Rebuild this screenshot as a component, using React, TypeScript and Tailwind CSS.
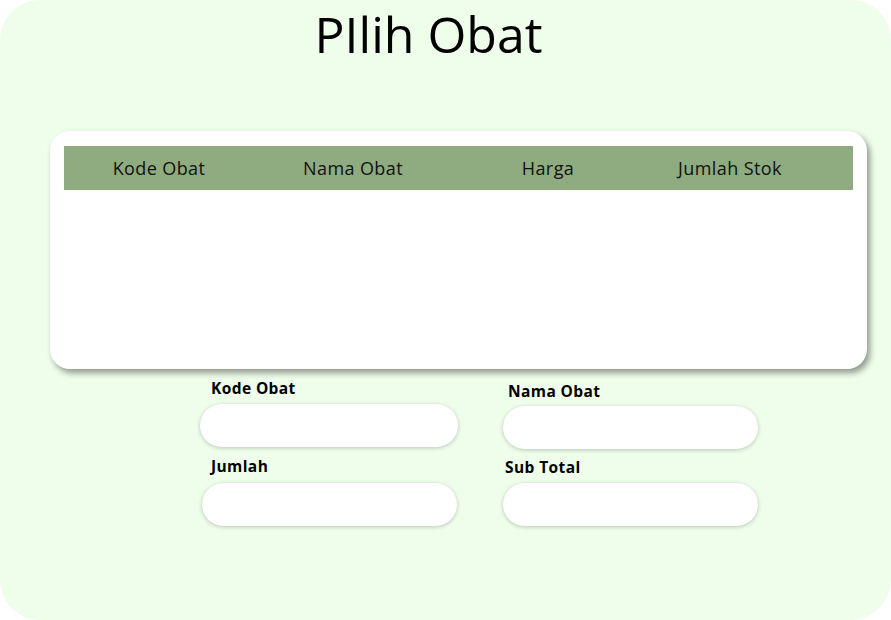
import React from "react";

const font = { fontFamily: '"Open Sans", "Noto Sans", sans-serif' };

function Field({ label, labelClass, inputClass }: { label: string; labelClass: string; inputClass: string }) {
  return (
    <>
      <div className={`h-[20px] leading-[20px] text-[15.5px] font-bold tracking-[0.4px] text-black ${labelClass}`}>{label}</div>
      <div className={`h-[43px] rounded-full bg-white shadow-[0_1px_4px_rgba(0,0,0,0.22)] ${inputClass}`} />
    </>
  );
}

export default function App() {
  return (
    <div className="w-[891px] h-[620px] bg-white" style={font}>
      <div className="w-[891px] h-[620px] rounded-[40px] bg-[#effdeb] flex flex-col overflow-hidden">
        <div className="pt-[9px] flex justify-center pr-[34px]">
          <h1 className="text-[50px] leading-[50px] font-normal text-black">PIlih Obat</h1>
        </div>
        <div className="mt-[72px] ml-[50px] w-[817px] h-[238px] rounded-[20px] bg-white shadow-[3px_4px_6px_rgba(0,0,0,0.4)] pt-[15px] pl-[14px]">
          <div className="w-[789px] h-[44px] bg-[#8fab80] grid grid-cols-[190px_198px_192px_172px] items-center text-[18px] font-medium tracking-[0.4px] text-[#111]">
            <div className="text-center">Kode Obat</div>
            <div className="text-center">Nama Obat</div>
            <div className="text-center">Harga</div>
            <div className="text-center">Jumlah Stok</div>
          </div>
        </div>
        <div className="flex">
          <div className="ml-[200px] w-[258px] flex flex-col">
            <Field label="Kode Obat" labelClass="mt-[9px] ml-[11px]" inputClass="mt-[6px] w-[258px]" />
            <Field label="Jumlah" labelClass="mt-[9px] ml-[11px]" inputClass="mt-[7px] ml-[2px] w-[255px]" />
          </div>
          <div className="ml-[45px] w-[255px] flex flex-col">
            <Field label="Nama Obat" labelClass="mt-[12px] ml-[5px]" inputClass="mt-[5px] w-[255px]" />
            <Field label="Sub Total" labelClass="mt-[8px] ml-[2px]" inputClass="mt-[6px] w-[255px]" />
          </div>
        </div>
      </div>
    </div>
  );
}
